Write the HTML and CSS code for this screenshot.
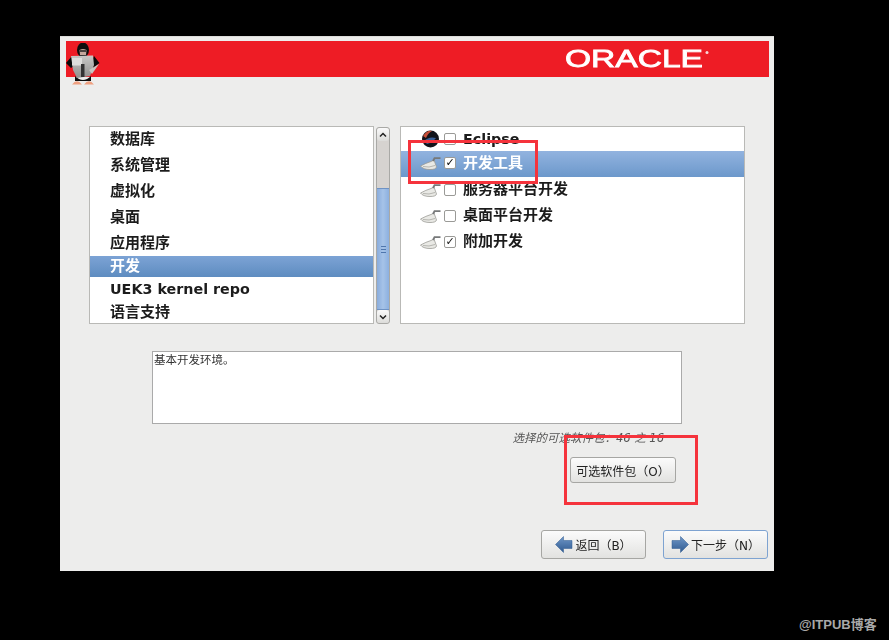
FILE: index.html
```html
<!DOCTYPE html>
<html lang="zh-CN">
<head>
    <meta charset="UTF-8">
    <meta name="viewport" content="width=device-width, initial-scale=1.0">
    <title>Oracle Linux Installer</title>
    <link rel="stylesheet" href="styles.css">
</head>
<body>
    <svg class="defs" width="0" height="0">
        <defs>
            <g id="tool">
                <path d="M0.500 9 Q6 6 11 4.500 L14 3 L16.500 10 Q16 12.500 10 12.500 Q3 12.500 0.500 9z" fill="#e9e9e5" stroke="#9a9a96" stroke-width="0.800"/>
                <path d="M13 4 L14.500 1.200 L20.500 1.200" fill="none" stroke="#77797a" stroke-width="1.800"/>
                <path d="M3 9.500 Q9 11 15 8.500" fill="none" stroke="#b5b5b0" stroke-width="1"/>
            </g>
            <linearGradient id="arrow-fill" x1="0" y1="0" x2="0" y2="1">
                <stop offset="0" stop-color="#6f97c8"/>
                <stop offset="1" stop-color="#2f5a90"/>
            </linearGradient>
            <linearGradient id="armor" x1="0" y1="0" x2="0" y2="1">
                <stop offset="0" stop-color="#c9c9c7"/>
                <stop offset="1" stop-color="#8f8f8d"/>
            </linearGradient>
        </defs>
    </svg>

    <div class="window">
        <header class="banner">
            <svg class="penguin" viewBox="0 0 34 42" width="34" height="42">
                <ellipse cx="17" cy="7" rx="6" ry="7.500" fill="#0d0d0d"/>
                <path d="M13.500 7 Q17 5 20.500 7 L20 12 L14 12z" fill="#c4a79c"/>
                <path d="M14 8h6" stroke="#222" stroke-width="1.500"/>
                <path d="M6 13 L0 20 L5 25 L9 22z M28 13 L33.500 20 L27 25 L24 22z" fill="#0a0a0a"/>
                <path d="M9 33 Q17 41 25 33 L25 38 H9z" fill="#0d0d0d"/>
                <path d="M5 13 L27 12.500 L28 22 L24 33 L11 35 L7 27z" fill="url(#armor)"/>
                <rect x="6" y="15" width="10" height="7.500" fill="#dededc"/>
                <path d="M15 21h3.500v13H15z" fill="#333"/>
                <path d="M23 27 L33 21 L26 31z" fill="#c6c6c2"/>
                <path d="M6 41.500 Q11 35 16 41.500z M18 41.500 Q23 35 28 41.500z" fill="#f0a080"/>
            </svg>
            <svg class="logo" viewBox="0 0 146 20" width="146" height="20">
                <text x="0" y="18" textLength="138" lengthAdjust="spacingAndGlyphs" class="logo-text">ORACLE</text>
                <circle cx="142" cy="3.500" r="1.500" fill="#f6d8d8"/>
            </svg>
        </header>

        <div class="panels">
            <ul class="list groups">
                <li class="row first">数据库</li>
                <li class="row">系统管理</li>
                <li class="row">虚拟化</li>
                <li class="row">桌面</li>
                <li class="row">应用程序</li>
                <li class="row short selected">开发</li>
                <li class="row mid latin">UEK3 kernel repo</li>
                <li class="row last">语言支持</li>
            </ul>

            <div class="scrollbar">
                <div class="arrow">
                    <svg width="10" height="8" viewBox="0 0 10 8"><path d="M2 5.500 L5 2.500 L8 5.500" fill="none" stroke="#222" stroke-width="1.500"/></svg>
                </div>
                <div class="trough"></div>
                <div class="thumb"><span class="grip"></span></div>
                <div class="arrow">
                    <svg width="10" height="8" viewBox="0 0 10 8"><path d="M2 2.500 L5 5.500 L8 2.500" fill="none" stroke="#222" stroke-width="1.500"/></svg>
                </div>
            </div>

            <ul class="list options">
                <li class="row first">
                    <svg class="icon" width="21" height="18" viewBox="0 0 21 18">
                        <circle cx="10.500" cy="9" r="8.500" fill="#12141b"/>
                        <path d="M3 6 Q7 0 12 1 Q8 3 6 8z" fill="#c8503a"/>
                        <path d="M4 11 Q9 6 16 8 Q12 13 7 14z" fill="#3a6098"/>
                    </svg>
                    <span class="check"></span>
                    <span class="latin">Eclipse</span>
                </li>
                <li class="row selected">
                    <svg class="icon" width="21" height="13" viewBox="0 0 21 13"><use href="#tool"/></svg>
                    <span class="check on">✓</span>
                    <span class="label">开发工具</span>
                </li>
                <li class="row">
                    <svg class="icon" width="21" height="13" viewBox="0 0 21 13"><use href="#tool"/></svg>
                    <span class="check"></span>
                    <span class="label">服务器平台开发</span>
                </li>
                <li class="row">
                    <svg class="icon" width="21" height="13" viewBox="0 0 21 13"><use href="#tool"/></svg>
                    <span class="check"></span>
                    <span class="label">桌面平台开发</span>
                </li>
                <li class="row">
                    <svg class="icon" width="21" height="13" viewBox="0 0 21 13"><use href="#tool"/></svg>
                    <span class="check on">✓</span>
                    <span class="label">附加开发</span>
                </li>
            </ul>
        </div>

        <div class="description">基本开发环境。</div>
        <p class="status">选择的可选软件包：46 之 16</p>
        <div class="optional-wrap">
            <button class="btn optional">可选软件包（O）</button>
        </div>

        <footer class="actions">
            <button class="btn nav">
                <svg width="18" height="17" viewBox="0 0 18 17"><path d="M0.500 8.500 L8.500 0.500 V4.500 H17 V12.500 H8.500 V16.500z" fill="url(#arrow-fill)" stroke="#2f5a90" stroke-width="0.500" stroke-linejoin="round"/></svg>
                <span>返回（B）</span>
            </button>
            <button class="btn nav focus">
                <svg width="18" height="17" viewBox="0 0 18 17"><path d="M17.500 8.500 L9.500 0.500 V4.500 H1 V12.500 H9.500 V16.500z" fill="url(#arrow-fill)" stroke="#2f5a90" stroke-width="0.500" stroke-linejoin="round"/></svg>
                <span>下一步（N）</span>
            </button>
        </footer>
    </div>

    <!-- red annotations drawn over the screenshot -->
    <div class="mark mark-tools"></div>
    <div class="mark mark-optional"></div>
    <div class="watermark">@ITPUB博客</div>
</body>
</html>
```

FILE: styles.css
```css
* {
    box-sizing: border-box;
}
html, body {
    height: 100%;
}
body {
    margin: 0;
    background: #000;
    overflow: hidden;
    position: relative;
    font-family: "DejaVu Sans", "Noto Sans CJK SC", sans-serif;
    color: #1c1c1c;
}
.defs {
    position: absolute;
}
.window {
    margin: 36px 0 0 60px;
    width: 714px;
    height: 535px;
    background: #ededec;
    border-top: 1px solid #dcdcda;
    display: flex;
    flex-direction: column;
    filter: blur(0.4px);
}
.banner {
    position: relative;
    margin: 4px 5px 0 6px;
    height: 36px;
    background: #ee1c25;
    display: flex;
    align-items: center;
    justify-content: flex-end;
    padding-right: 58px;
}
.penguin {
    position: absolute;
    left: 0;
    top: 2px;
}
.logo-text {
    font-family: "Liberation Sans", sans-serif;
    font-size: 24px;
    font-weight: normal;
    fill: #fff;
    stroke: #fff;
    stroke-width: 0.800px;
}
.panels {
    display: flex;
    margin: 49px 0 0 29px;
    height: 198px;
}
.list {
    list-style: none;
    margin: 0;
    padding: 0;
    background: #fff;
    border: 1px solid #b9b9b6;
    font-size: 15px;
    font-weight: bold;
    overflow: hidden;
}
.groups {
    width: 285px;
}
.options {
    width: 345px;
    margin-left: 10px;
}
.row {
    height: 26px;
    display: flex;
    align-items: center;
    white-space: nowrap;
}
.latin {
    font-size: 14.300px;
}
.groups .row {
    padding: 0 0 4px 20px;
}
.groups .first {
    height: 25px;
}
.groups .row.short {
    height: 21px;
    padding-bottom: 4px;
}
.groups .row.mid {
    height: 23px;
    padding-bottom: 0;
}
.groups .row.last {
    height: 23px;
    padding-bottom: 3px;
}
.groups .selected {
    background: linear-gradient(#7ca3d5, #5e8cc0);
    color: #fff;
}
.options .row {
    padding-left: 19px;
}
.options .row.first {
    height: 24px;
}
.options .row.selected {
    background: linear-gradient(#92b3df, #6c98cb);
    color: #fff;
    padding-bottom: 2px;
}
.label {
    margin-bottom: 6px;
}
.selected .label {
    margin-bottom: 3px;
}
.icon {
    flex: none;
}
.check {
    width: 12px;
    height: 12px;
    margin: 0 7px 0 3px;
    flex: none;
    background: #fff;
    border: 1px solid #9a9a97;
    border-radius: 2px;
    font-family: "DejaVu Sans", sans-serif;
    font-size: 11px;
    line-height: 10px;
    text-align: center;
    color: #111;
}
.selected .check {
    font-weight: bold;
    color: #000;
}
.scrollbar {
    width: 14px;
    margin: 1px 0 0 2px;
    display: flex;
    flex-direction: column;
    background: #d6d3d0;
    border: 1px solid #a9a9a6;
    border-radius: 3px;
}
.arrow {
    height: 13px;
    flex: none;
    background: linear-gradient(#fafafa, #dcdcda);
    border-radius: 3px;
    display: flex;
    align-items: center;
    justify-content: center;
}
.trough {
    height: 47px;
    flex: none;
}
.thumb {
    flex: 1;
    background: linear-gradient(90deg, #89acdc, #a6c3e8 50%, #8cb0df);
    border-top: 1px solid #6f93c4;
    border-bottom: 1px solid #6f93c4;
    display: flex;
    align-items: center;
    justify-content: center;
}
.grip {
    width: 5px;
    height: 7px;
    border-top: 1px solid #4f76ad;
    border-bottom: 1px solid #4f76ad;
    background: linear-gradient(#4f76ad, #4f76ad) center / 100% 1px no-repeat;
}
.description {
    margin: 27px 0 0 92px;
    width: 530px;
    height: 73px;
    background: #fff;
    border: 1px solid #aaa;
    padding: 1px 0 0 1px;
    font-size: 11.500px;
    line-height: 15px;
    color: #333;
}
.status {
    margin: 7px 110px 0 0;
    text-align: right;
    font-size: 11.500px;
    line-height: 14px;
    font-style: italic;
    color: #555;
}
.optional-wrap {
    display: flex;
    justify-content: flex-end;
    margin: 12px 98px 0 0;
}
.btn {
    font-family: "DejaVu Sans", "Noto Sans CJK SC", sans-serif;
    font-size: 12px;
    color: #222;
    background: linear-gradient(#fbfbfb, #e2e2e0);
    border: 1px solid #a6a6a3;
    border-radius: 3px;
    padding: 0;
    display: flex;
    align-items: center;
    justify-content: center;
}
.optional {
    width: 106px;
    height: 26px;
}
.actions {
    margin-top: auto;
    padding: 0 6px 12px 0;
    display: flex;
    justify-content: flex-end;
    gap: 17px;
}
.nav {
    width: 105px;
    height: 29px;
    gap: 2px;
}
.focus {
    border-color: #7ea3d1;
}
.mark {
    position: absolute;
    border: 3px solid #f5333c;
}
.mark-tools {
    left: 408px;
    top: 140px;
    width: 130px;
    height: 44px;
}
.mark-optional {
    left: 564px;
    top: 435px;
    width: 134px;
    height: 70px;
}
.watermark {
    position: absolute;
    left: 799px;
    top: 617px;
    font-family: "Liberation Sans", "Noto Sans CJK SC", sans-serif;
    font-size: 13px;
    line-height: 16px;
    font-weight: bold;
    color: #a8a8a8;
}
```
